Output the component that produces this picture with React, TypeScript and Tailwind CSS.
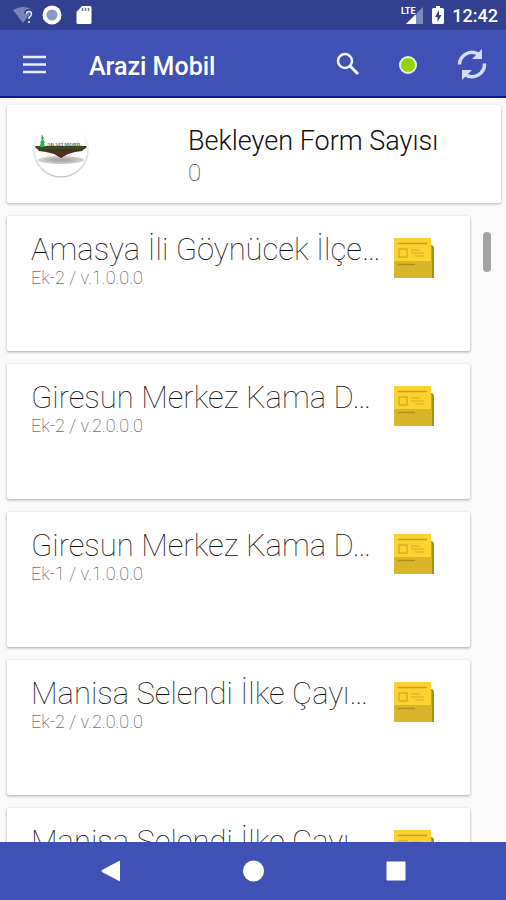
import React from 'react';

const forms = [
  { id: 1, title: 'Amasya İli Göynücek İlçe…', version: 'Ek-2 / v.1.0.0.0' },
  { id: 2, title: 'Giresun Merkez Kama D…', version: 'Ek-2 / v.2.0.0.0' },
  { id: 3, title: 'Giresun Merkez Kama D…', version: 'Ek-1 / v.1.0.0.0' },
  { id: 4, title: 'Manisa Selendi İlke Çayı…', version: 'Ek-2 / v.2.0.0.0' },
  { id: 5, title: 'Manisa Selendi İlke Çayı…', version: '' },
];

const FormIcon = () => (
  <svg className="h-10 w-10 shrink-0" viewBox="0 0 40 40" aria-hidden="true">
    <path d="M36 7h2l2 2v31h-4z" fill="#a98d1f" />
    <path d="M36 8h2v32h-2z" fill="#cda923" />
    <path d="M0 0h37v23H0z" fill="#fcd230" />
    <path d="M0 23h38v17H0z" fill="#d9b52a" />
    <path d="M4 5.500h29" stroke="#c99f20" strokeWidth="1.500" />
    <path d="M5 11h8v8h-8z" fill="none" stroke="#dcae25" strokeWidth="1.500" />
    <path d="M17 12h9M17 15h13M21 18h9" stroke="#e5b92a" strokeWidth="1.500" />
    <path d="M4 26.500h17" stroke="#b28f1c" strokeWidth="1.500" />
  </svg>
);

const Logo = () => (
  <svg className="h-14 w-14 shrink-0" viewBox="0 0 56 56" role="img" aria-label="Arazi Mobil">
    <defs>
      <linearGradient id="ring" x1="0" y1="0" x2="0" y2="1">
        <stop offset="0.1" stopColor="#fff" />
        <stop offset="0.7" stopColor="#dcdcdc" />
        <stop offset="1" stopColor="#c9c9c9" />
      </linearGradient>
      <radialGradient id="shade">
        <stop offset="0.3" stopColor="#aaa" />
        <stop offset="1" stopColor="#d4d4d4" />
      </radialGradient>
    </defs>
    <circle cx="28" cy="27" r="27" fill="#fff" stroke="url(#ring)" strokeWidth="1.500" />
    <ellipse cx="28" cy="37" rx="23" ry="4" fill="url(#shade)" />
    <path d="M2 23h52l-5 5-7 1-7 2-7 4-7-4-8-2-7-1z" fill="#4d3021" />
    <path d="M2 24l4-1 3 1 4-1 5 1 5-1 5 1 6-1 5 1 6-1 4 1 5 0-2 2-48 0z" fill="#315323" />
    <path d="M9 11l2 5-1 0 2 4-1 0 1 4H6l2-4-1 0 2-4-1 0z" fill="#3aa856" />
    <text x="14" y="23" fontSize="5" fontWeight="700" fontFamily="Liberation Serif, serif" fill="#565b56">ARAZİ MOBİL</text>
  </svg>
);

const StatusBar = () => (
  <div className="flex h-[30px] shrink-0 items-center justify-between bg-[#32408f] pl-3 pr-2 text-white">
    <div className="flex items-center gap-2">
      <svg className="h-5 w-6" viewBox="0 0 24 20" aria-hidden="true">
        <path d="M1 5Q11-1 21 5L11 18z" fill="#7883bb" />
        <path d="M14 9q0-3 3-3t3 3q0 2-3 4v2M17 17v2" fill="none" stroke="#32408f" strokeWidth="4" />
        <path d="M14.500 9q0-2.500 2.500-2.500t2.500 2.500q0 2-2.500 3.500v1.500M17 16v2" fill="none" stroke="#e8eaf6" strokeWidth="1.500" />
      </svg>
      <svg className="h-5 w-4" viewBox="0 0 16 20" overflow="visible" aria-hidden="true">
        <circle cx="8" cy="10" r="9.500" fill="#fff" />
        <circle cx="8" cy="10" r="5.500" fill="#8e98c8" />
      </svg>
      <svg className="ml-2 h-5 w-4" viewBox="0 0 16 20" aria-hidden="true">
        <path d="M6 1h8q1.500 0 1.500 1.500v15q0 1.500-1.500 1.500H2q-1.500 0-1.500-1.500V7z" fill="#fff" />
        <path d="M6.500 3v3M9.500 3v3M12.500 3v3" stroke="#68729f" strokeWidth="1.500" />
      </svg>
    </div>
    <div className="flex items-center gap-2">
      <svg className="h-5 w-6" viewBox="0 0 24 20" aria-hidden="true">
        <path d="M23 2v17H6z" fill="#8089bb" />
        <path d="M16 9v10H6z" fill="#fff" />
        <text x="1" y="9" fontSize="9" fontWeight="700" fontFamily="Roboto, sans-serif" fill="#fff" stroke="#32408f" strokeWidth="2" paintOrder="stroke">LTE</text>
      </svg>
      <svg className="h-5 w-3" viewBox="0 0 12 20" aria-hidden="true">
        <path d="M4 1h4v2h2.500q1.500 0 1.500 1.500v13q0 1.500-1.500 1.500h-9Q0 19 0 17.500v-13Q0 3 1.500 3H4z" fill="#fff" />
        <path d="M7 5l-4 7h2.500v5l4-7H7z" fill="#32408f" />
      </svg>
      <span className="pt-px text-lg font-medium leading-5">12:42</span>
    </div>
  </div>
);

const AppBar = () => (
  <header className="flex h-[68px] shrink-0 items-center border-b-2 border-[#0b18a0] bg-[#3f51b5] pl-[22px] pr-[18px] pt-1 text-white">
    <button type="button" aria-label="Menü" className="h-6 w-6">
      <svg viewBox="0 0 24 24" overflow="visible" aria-hidden="true">
        <path d="M1 4h23M1 11.500h23M1 19h23" stroke="#e9ebfa" strokeWidth="2.500" />
      </svg>
    </button>
    <h1 className="ml-[43px] flex-1 pt-1 text-[25px] font-medium leading-8">Arazi Mobil</h1>
    <div className="flex items-center">
      <button type="button" aria-label="Ara" className="h-6 w-6">
        <svg viewBox="0 0 24 24" overflow="visible" fill="none" stroke="#f1f3ff" aria-hidden="true">
          <circle cx="9" cy="8" r="7" strokeWidth="2.500" />
          <path d="M14 13l8 8" strokeWidth="3" />
        </svg>
      </button>
      <button type="button" aria-label="Bağlantı durumu" className="ml-[38px] h-5 w-5">
        <svg viewBox="0 0 20 20" aria-hidden="true">
          <circle cx="10" cy="10" r="8" fill="#95d200" stroke="#e6eef0" strokeWidth="2" />
        </svg>
      </button>
      <button type="button" aria-label="Yenile" className="ml-[38px] h-8 w-8">
        <svg viewBox="0 0 32 32" overflow="visible" aria-hidden="true">
          <path d="M3.500 15.500A12.500 12.500 0 0 1 23 5.500M28.500 14.500A12.500 12.500 0 0 1 9 25.500" fill="none" stroke="#d6dbf5" strokeWidth="3.500" />
          <path d="M26 0v10H16zM6 31V21h10z" fill="#d6dbf5" />
        </svg>
      </button>
    </div>
  </header>
);

const NavBar = () => (
  <nav className="flex h-[58px] shrink-0 items-center justify-center gap-[118px] bg-[#3f51b5]">
    <button type="button" aria-label="Geri" className="h-6 w-6">
      <svg viewBox="0 0 24 24" fill="#fff" aria-hidden="true">
        <path d="M21 2.500v19q0 1-1 .5L3 13q-1-1 0-2l17-9q1-.5 1 .5z" />
      </svg>
    </button>
    <button type="button" aria-label="Ana ekran" className="h-6 w-6">
      <svg viewBox="0 0 24 24" fill="#fff" aria-hidden="true">
        <circle cx="12.500" cy="12" r="10.500" />
      </svg>
    </button>
    <button type="button" aria-label="Son uygulamalar" className="h-6 w-6">
      <svg viewBox="0 0 24 24" fill="#fff" aria-hidden="true">
        <rect x="3.500" y="2.500" width="19" height="19" rx="1" />
      </svg>
    </button>
  </nav>
);

const App = () => {
  return (
    <div className="flex h-screen flex-col bg-[#fafafa] font-[Roboto,sans-serif]">
      <StatusBar />
      <AppBar />

      <main className="flex min-h-0 flex-1 flex-col gap-[13px] overflow-hidden pl-[7px] pr-[5px] pt-[7px]">
        <section className="flex h-[98px] shrink-0 items-start rounded-xs bg-white pl-[26px] pt-[18px] shadow-[0_1px_3px_rgba(0,0,0,0.3)]">
          <Logo />
          <div className="ml-[99px]">
            <h2 className="text-[27px] font-light leading-9 text-[#111]">Bekleyen Form Sayısı</h2>
            <p className="text-2xl font-thin leading-7 text-[#333]">0</p>
          </div>
        </section>

        <div className="flex min-h-0 flex-1 items-start justify-between pr-[10px]">
          <ul className="mr-[13px] flex flex-1 flex-col gap-[13px]">
            {forms.map((form) => (
              <li
                key={form.id}
                className="flex h-[135px] items-start justify-between rounded-xs bg-white pl-6 pr-9 pt-[22px] shadow-[0_1px_3px_rgba(0,0,0,0.35)]"
              >
                <div className="-mt-1 min-w-0">
                  <h3 className="whitespace-nowrap text-[31px] font-thin leading-8 text-[#111]">{form.title}</h3>
                  <p className="text-lg font-thin leading-6 text-[#333]">{form.version}</p>
                </div>
                <FormIcon />
              </li>
            ))}
          </ul>
          <div className="mt-4 h-10 w-2 shrink-0 rounded-full bg-[#a3a3a3]" />
        </div>
      </main>

      <NavBar />
    </div>
  );
};

export default App;
